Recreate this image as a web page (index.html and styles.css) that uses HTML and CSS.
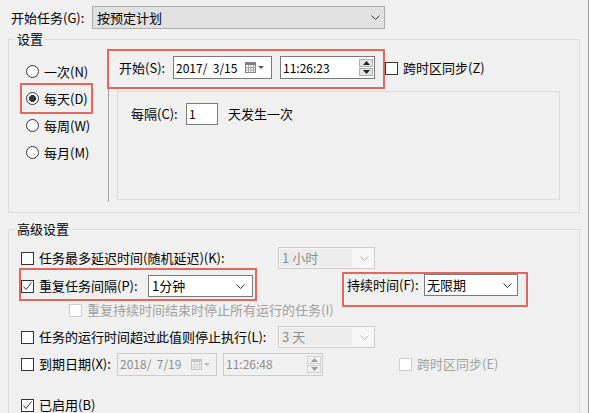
FILE: index.html
```html
<!DOCTYPE html>
<html lang="zh-CN">
<head>
<meta charset="utf-8">
<title>任务计划</title>
<link rel="stylesheet" href="styles.css">
</head>
<body>
<div class="page">
  <div class="top-row">
    <span class="top-label">开始任务(G):</span>
    <div class="combo combo-top">
      <span class="combo-text">按预定计划</span>
      <svg class="chev" width="9" height="5" viewBox="0 0 9 5"><path d="M0.5 0.5 L4.5 4.5 L8.5 0.5" fill="none" stroke="#333" stroke-width="1"/></svg>
    </div>
  </div>

  <div class="group group-settings">
    <div class="legend">设置</div>
    <div class="settings-body">
      <div class="radios">
        <div class="radio-row"><span class="radio"></span><span>一次(N)</span></div>
        <div class="radio-row hl"><span class="radio on"></span><span>每天(D)</span></div>
        <div class="radio-row"><span class="radio"></span><span>每周(W)</span></div>
        <div class="radio-row"><span class="radio"></span><span>每月(M)</span></div>
      </div>
      <div class="vsep"></div>
      <div class="settings-right">
        <div class="start-line">
          <div class="start-box hl">
            <span class="start-label">开始(S):</span>
            <div class="field date-field">
              <span class="field-text">2017/  3/15</span>
              <svg class="cal" width="19" height="11" viewBox="0 0 19 11">
                <rect x="0.5" y="0.5" width="10" height="10" fill="#fff" stroke="#808080"/>
                <rect x="0.5" y="0.5" width="10" height="2.5" fill="#808080"/>
                <path d="M3.5 3 V10.5 M6 3 V10.5 M8.5 3 V10.5 M1 5.5 H10.5 M1 8 H10.5" stroke="#a8a8a8" stroke-width="1"/>
                <polygon points="13,4 19,4 16,7" fill="#555"/>
              </svg>
            </div>
            <div class="field time-field">
              <span class="field-text">11:26:23</span>
              <div class="spin">
                <span class="spin-btn"><svg width="7" height="4" viewBox="0 0 7 4"><polygon points="3.5,0 7,4 0,4" fill="#222"/></svg></span>
                <span class="spin-btn"><svg width="7" height="4" viewBox="0 0 7 4"><polygon points="0,0 7,0 3.5,4" fill="#222"/></svg></span>
              </div>
            </div>
          </div>
          <div class="check-item tz"><span class="check"></span><span>跨时区同步(Z)</span></div>
        </div>
        <div class="panel">
          <div class="every-row">
            <span class="every-label">每隔(C):</span>
            <div class="field num-field"><span class="field-text">1</span></div>
            <span>天发生一次</span>
          </div>
        </div>
      </div>
    </div>
  </div>

  <div class="group group-adv">
    <div class="legend">高级设置</div>
    <div class="adv-body">
      <div class="row row1">
        <div class="check-item lab-wide"><span class="check"></span><span>任务最多延迟时间(随机延迟)(K):</span></div>
        <div class="combo combo-dis"><span class="combo-text dis-text">1 小时</span>
          <svg class="chev" width="9" height="5" viewBox="0 0 9 5"><path d="M0.5 0.5 L4.5 4.5 L8.5 0.5" fill="none" stroke="#b5b5b5" stroke-width="1"/></svg>
        </div>
      </div>

      <div class="row row2">
        <div class="wrap-a hl">
          <span class="check on"><svg width="11" height="11" viewBox="0 0 11 11"><polyline points="1.5,5.5 4,8.5 9.5,1.5" fill="none" stroke="#333" stroke-width="1"/></svg></span>
          <span class="repeat-label">重复任务间隔(P):</span>
          <div class="combo combo-white combo-repeat"><span class="combo-text">1分钟</span>
            <svg class="chev" width="9" height="5" viewBox="0 0 9 5"><path d="M0.5 0.5 L4.5 4.5 L8.5 0.5" fill="none" stroke="#333" stroke-width="1"/></svg>
          </div>
        </div>
        <div class="wrap-b hl">
          <span class="dur-label">持续时间(F):</span>
          <div class="combo combo-white combo-dur"><span class="combo-text">无限期</span>
            <svg class="chev" width="9" height="5" viewBox="0 0 9 5"><path d="M0.5 0.5 L4.5 4.5 L8.5 0.5" fill="none" stroke="#333" stroke-width="1"/></svg>
          </div>
        </div>
      </div>

      <div class="row row3">
        <div class="check-item dis"><span class="check check-dis"></span><span>重复持续时间结束时停止所有运行的任务(I)</span></div>
      </div>

      <div class="row row4">
        <div class="check-item lab-wide"><span class="check"></span><span>任务的运行时间超过此值则停止执行(L):</span></div>
        <div class="combo combo-dis"><span class="combo-text dis-text">3 天</span>
          <svg class="chev" width="9" height="5" viewBox="0 0 9 5"><path d="M0.5 0.5 L4.5 4.5 L8.5 0.5" fill="none" stroke="#b5b5b5" stroke-width="1"/></svg>
        </div>
      </div>

      <div class="row row5">
        <div class="check-item lab-exp"><span class="check"></span><span>到期日期(X):</span></div>
        <div class="field field-dis date-dis">
          <span class="field-text">2018/  7/19</span>
          <svg class="cal" width="19" height="11" viewBox="0 0 19 11">
            <rect x="0.5" y="0.5" width="10" height="10" fill="#f4f4f4" stroke="#c4c4c4"/>
            <rect x="0.5" y="0.5" width="10" height="2.5" fill="#c4c4c4"/>
            <path d="M3.5 3 V10.5 M6 3 V10.5 M8.5 3 V10.5 M1 5.5 H10.5 M1 8 H10.5" stroke="#d4d4d4" stroke-width="1"/>
            <polygon points="13,4 19,4 16,7" fill="#b8b8b8"/>
          </svg>
        </div>
        <div class="field field-dis time-dis">
          <span class="field-text">11:26:48</span>
          <div class="spin spin-dis">
            <span class="spin-btn"><svg width="7" height="4" viewBox="0 0 7 4"><polygon points="3.5,0 7,4 0,4" fill="#9a9a9a"/></svg></span>
            <span class="spin-btn"><svg width="7" height="4" viewBox="0 0 7 4"><polygon points="0,0 7,0 3.5,4" fill="#9a9a9a"/></svg></span>
          </div>
        </div>
        <div class="check-item dis tz2"><span class="check check-dis"></span><span>跨时区同步(E)</span></div>
      </div>

      <div class="row row6">
        <div class="check-item"><span class="check on"><svg width="11" height="11" viewBox="0 0 11 11"><polyline points="1.5,5.5 4,8.5 9.5,1.5" fill="none" stroke="#333" stroke-width="1"/></svg></span><span>已启用(B)</span></div>
      </div>
    </div>
  </div>
</div>
</body>
</html>
```

FILE: styles.css
```css
* { box-sizing: border-box; }
html, body { margin: 0; padding: 0; }
body {
  background: #f0f0f0;
  font-family: "Noto Sans CJK SC", "Noto Sans", sans-serif;
  font-size: 13px;
  line-height: 16px;
  color: #000;
  width: 589px;
  height: 413px;
  overflow: hidden;
}
.page {
  width: 589px;
  height: 413px;
  border-right: 1px solid #9a9a9a;
  overflow: hidden;
}

/* top row */
.top-row {
  display: flex;
  align-items: center;
  height: 23px;
  margin-top: 6px;
  padding-left: 11px;
}
.top-label { width: 81px; flex: none; }

.combo {
  display: flex;
  align-items: center;
  justify-content: space-between;
  flex: none;
  height: 22px;
}
.combo-top {
  width: 293px;
  height: 23px;
  background: #e1e1e1;
  border: 1px solid #adadad;
  padding: 0 4px 0 4px;
}
.combo-white {
  background: #fff;
  border: 1px solid #7a7a7a;
}
.combo-repeat { width: 105px; padding: 0 7px 0 3px; }
.combo-dur { width: 94px; padding: 0 5px 0 2px; }
.combo-dis {
  width: 97px;
  border: 1px solid #cccccc;
  background: #f7f7f7;
  padding: 1px 5px 1px 1px;
}
.combo-dis .combo-text {
  background: #ececec;
  height: 100%;
  width: 72px;
  padding-left: 2px;
  display: flex;
  align-items: center;
}
.dis-text { color: #8c8c8c; }
.chev { flex: none; display: block; }

/* groups */
.group {
  margin-left: 8px;
  width: 572px;
  border: 1px solid #dcdcdc;
}
.legend {
  width: max-content;
  margin-top: -9px;
  margin-left: 6px;
  padding: 0 2px;
  background: #f0f0f0;
  height: 16px;
}
.group-settings { margin-top: 10px; height: 174px; }
.group-adv { margin-top: 16px; height: 220px; }

.settings-body { display: flex; }
.radios { width: 99px; flex: none; padding-top: 11px; }
.radio-row {
  display: flex;
  align-items: center;
  height: 27px;
  width: 69px;
  margin-left: 13px;
  padding-left: 4px;
}
.radio {
  width: 13px;
  height: 13px;
  border: 1px solid #333;
  border-radius: 50%;
  background: #fff;
  margin-right: 5px;
  flex: none;
}
.radio.on { background: radial-gradient(circle, #333 0 3.2px, #fff 3.8px); }
.hl { outline: 2px solid #e3675a; }

.vsep {
  width: 1px;
  flex: none;
  background: #a0a0a0;
  margin-top: 3px;
  height: 152px;
}
.settings-right { display: flex; flex-direction: column; }
.start-line { display: flex; align-items: flex-start; margin-top: 4px; }
.start-box {
  display: flex;
  align-items: flex-start;
  width: 274px;
  height: 36px;
  padding: 5px 0 0 10px;
  flex: none;
}
.start-label { width: 54px; line-height: 23px; flex: none; }

.field {
  display: flex;
  align-items: center;
  background: #fff;
  border: 1px solid #7a7a7a;
  height: 23px;
  flex: none;
}
.field-text { white-space: pre; font-size: 12px; }
.date-field { width: 99px; margin-right: 8px; padding: 0 7px 0 2px; justify-content: space-between; }
.time-field { width: 95px; padding: 0 1px 0 2px; justify-content: space-between; }
.cal { display: block; flex: none; }

.spin { display: flex; flex-direction: column; gap: 1px; }
.spin-btn {
  width: 14px;
  height: 8px;
  background: #e5e5e5;
  border: 1px solid #adadad;
  display: flex;
  align-items: center;
  justify-content: center;
}
.spin-btn svg { display: block; }

.check-item { display: flex; align-items: center; height: 16px; flex: none; }
.check {
  width: 13px;
  height: 13px;
  border: 1px solid #333;
  background: #fff;
  margin-right: 5px;
  flex: none;
  display: flex;
  align-items: center;
  justify-content: center;
}
.check svg { display: block; }
.check-dis { border-color: #cccccc; }
.dis { color: #a0a0a0; }
.tz { margin-left: 2px; margin-top: 9px; }

.panel {
  margin-left: 8px;
  margin-top: 4px;
  width: 443px;
  height: 109px;
  border: 1px solid #dcdcdc;
  padding: 11px 0 0 13px;
}
.every-row { display: flex; align-items: center; height: 22px; }
.every-label { width: 55px; flex: none; }
.num-field { width: 32px; height: 22px; margin-right: 10px; padding-left: 2px; }

/* advanced */
.adv-body { padding-left: 12px; }
.row { display: flex; align-items: center; }
.row1 { margin-top: 10px; height: 22px; }
.lab-wide { width: 257px; }
.row2 { margin-top: 5px; height: 24px; align-items: flex-start; }
.wrap-a {
  display: flex;
  align-items: center;
  width: 234px;
  height: 29px;
  margin-top: -4px;
  padding-top: 3px;
  flex: none;
}
.repeat-label { width: 109px; flex: none; }
.wrap-b {
  display: flex;
  align-items: flex-start;
  width: 182px;
  height: 31px;
  margin-left: 89px;
  padding: 0 8px 0 3px;
  flex: none;
}
.dur-label { width: 77px; line-height: 22px; flex: none; }
.row3 { margin-top: 4px; height: 16px; padding-left: 48px; }
.row4 { margin-top: 8px; height: 22px; }
.row5 { margin-top: 4px; height: 24px; }
.lab-exp { width: 96px; }
.field-dis { border: 1px solid #cccccc; background: #f0f0f0; color: #8c8c8c; }
.date-dis { width: 100px; margin-right: 6px; padding: 0 6px 0 2px; justify-content: space-between; }
.time-dis { width: 100px; padding: 0 1px 0 2px; justify-content: space-between; }
.spin-dis .spin-btn { background: #f0f0f0; border-color: #cfcfcf; }
.tz2 { margin-left: 76px; }
.row6 { margin-top: 21px; height: 16px; }
```
